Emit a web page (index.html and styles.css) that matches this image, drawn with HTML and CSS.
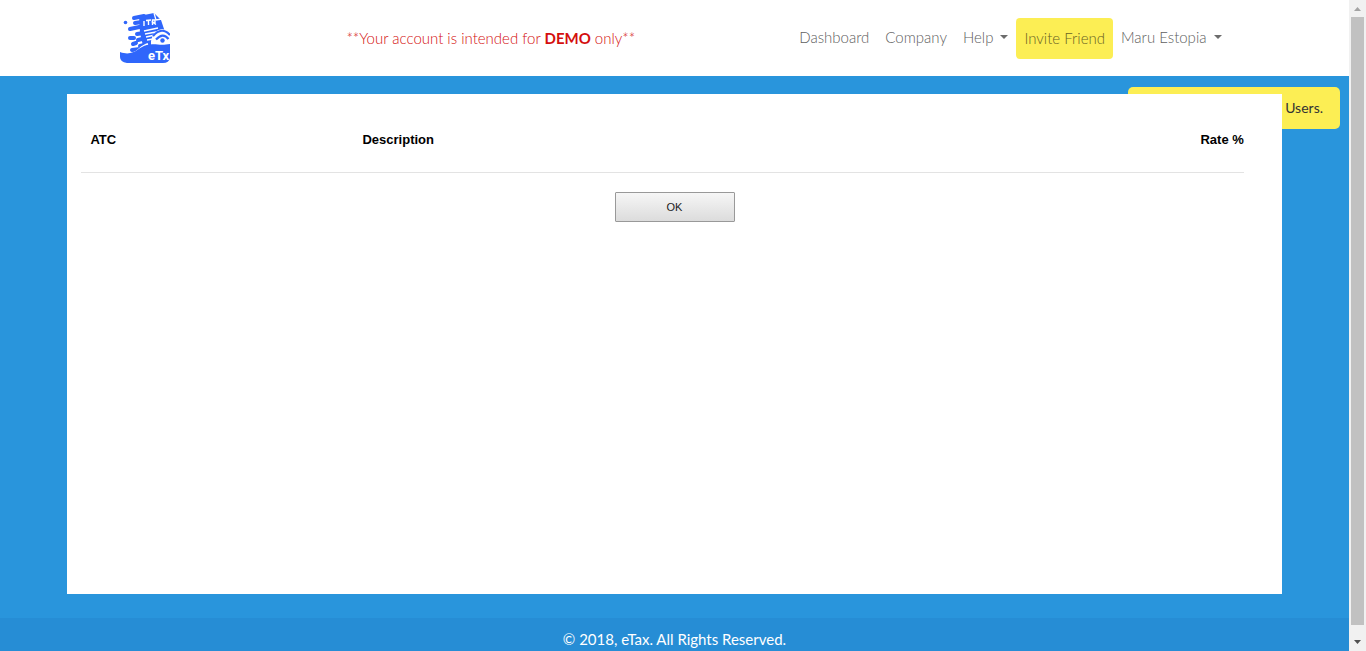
FILE: index.html
```html
<!DOCTYPE html>
<html lang="en">
<head>
<meta charset="utf-8">
<title>eTax</title>
<link rel="stylesheet" href="styles.css">
</head>
<body>
<div class="page">
  <header class="header">
    <div class="container">
      <a class="brand" href="#" aria-label="eTx home">
        <svg class="logo" viewBox="0 0 50 50" aria-hidden="true">
          <g fill="none" stroke="#2f66fb" stroke-width="4" stroke-linecap="round">
            <path d="M14 5 24 3M15 10 22 9M10 16 24 13M17 21 24 20M10 25H14M18 27 26 25M13 31 16 30M20 33 28 31M12 37 20 36"/>
          </g>
          <circle cx="5.500" cy="9.500" r="1.800" fill="#2f66fb"/>
          <path fill="#2f66fb" d="M19 3 34 0 41 7 49 31 24 37 20 20Z"/>
          <path fill="none" stroke="#fff" stroke-width="1.300" d="M34 0 36 7 42 6"/>
          <path fill="none" stroke="#fff" stroke-width="1.400" d="M24 18 38 15M25 21 36 19M26 24 35 22M27 27 33 26M24 8V13M26 7.500 31 7M28.500 7.500V12M32.500 12V7H35V9.500H33L36 11.500"/>
          <path fill="#fff" d="M31 28Q33 17 42 16L50 18V33H31Z"/>
          <g fill="none" stroke="#2f66fb" stroke-width="2.200"><path d="M33 23Q42 13 50 22M36 26.500Q43 19 48.500 26"/></g>
          <circle cx="42.500" cy="27.500" r="2.200" fill="#2f66fb"/>
          <path fill="none" stroke="#fff" stroke-width="2" d="M10 41C17 41 20 33 28 31"/>
          <path fill="#2f66fb" d="M0 39C14 44 18 34 27 32S39 33 50 31V45Q49 50 43 50H7Q0 49 0 44Z"/>
          <text class="logo-text" x="28" y="47">eTx</text>
        </svg>
      </a>
      <p class="notice">**Your account is intended for <strong>DEMO</strong> only**</p>
      <nav class="nav" aria-label="Main">
        <a class="nav-link" href="#">Dashboard</a>
        <a class="nav-link" href="#">Company</a>
        <a class="nav-link caret" href="#">Help</a>
        <a class="nav-link invite" href="#">Invite Friend</a>
        <a class="nav-link caret" href="#">Maru Estopia</a>
      </nav>
    </div>
  </header>
  <main class="main">
    <div class="toast" role="status">Users.</div>
    <section class="panel">
      <table class="rates">
        <thead>
          <tr><th class="col-atc">ATC</th><th>Description</th><th class="col-rate">Rate %</th></tr>
        </thead>
      </table>
      <button class="ok" type="button">OK</button>
    </section>
  </main>
  <footer class="footer">© 2018, eTax. All Rights Reserved.</footer>
</div>
<div class="scrollbar" aria-hidden="true">
  <svg class="arrow" viewBox="0 0 17 17"><path fill="#a3a3a3" d="M5 11 8.500 7 12 11Z"/></svg>
  <div class="thumb"></div>
  <svg class="arrow" viewBox="0 0 17 17"><path fill="#505050" d="M5 6H12L8.500 10Z"/></svg>
</div>
</body>
</html>
```
FILE: styles.css
```css
* { box-sizing: border-box; }
body {
  margin: 0;
  height: 100vh;
  display: grid;
  grid-template-columns: 1fr 17px;
  overflow: hidden;
  background: #2995dc;
  font-family: Lato, "Open Sans", sans-serif;
  font-size: 15px;
}
.page { display: flex; flex-direction: column; min-width: 0; }
.header { background: #fff; height: 76px; }
.container {
  max-width: 1110px;
  height: 100%;
  margin: 0 auto;
  display: flex;
  align-items: center;
}
.brand, .logo { display: block; width: 50px; height: 50px; }
.logo-text { fill: #fff; font: bold 13px "Liberation Sans Narrow", Roboto, sans-serif; }
.notice { margin: 0 auto 0 177px; color: #d40f0f; font-weight: 300; line-height: 20px; }
.notice strong { font-weight: 700; }
.nav { display: flex; align-items: flex-start; }
.nav-link {
  display: flex;
  align-items: center;
  padding: 7px 8px;
  color: #606060;
  line-height: 24px;
  font-weight: 300;
  text-decoration: none;
}
.caret::after {
  content: "";
  margin-left: 7px;
  border: 4px solid transparent;
  border-top: 4px solid #6c6c6c;
  border-bottom: 0;
}
.invite { padding: 8px 8px 9px; background: #fcee54; color: #686225; border-radius: 4px; }
.main { position: relative; flex: 1; padding: 18px 5% 24px; }
.toast {
  position: absolute;
  top: 11px;
  right: 9px;
  width: 212px;
  padding: 10px 17px;
  border-radius: 5px;
  background: #fcee54;
  color: #333;
  font-size: 14px;
  line-height: 22px;
  text-align: right;
}
.panel {
  position: relative;
  height: 100%;
  padding: 14px;
  background: #fff;
  font-family: "Liberation Sans", Arial, sans-serif;
}
.rates { width: 98%; border-collapse: collapse; border-bottom: 1px solid #e3e3e3; }
.rates th { height: 64px; padding: 0 9px; font-size: 13px; text-align: left; }
.rates .col-atc { width: 272px; }
.rates .col-rate { padding-right: 0; text-align: right; }
.ok {
  display: block;
  width: 120px;
  height: 30px;
  margin: 19px auto 0;
  border: 1px solid #999;
  border-radius: 1px;
  background: linear-gradient(#f6f6f6, #dcdcdc);
  color: #222;
  font: 11px "Liberation Sans", Arial, sans-serif;
}
.footer {
  height: 33px;
  padding-top: 10px;
  background: #268dd5;
  color: #fff;
  line-height: 22px;
  text-align: center;
}
.scrollbar { display: flex; flex-direction: column; background: #f1f1f1; }
.arrow { display: block; width: 17px; height: 17px; }
.thumb { flex: 1; margin: 0 2px 9px; background: #c1c1c1; }
```
